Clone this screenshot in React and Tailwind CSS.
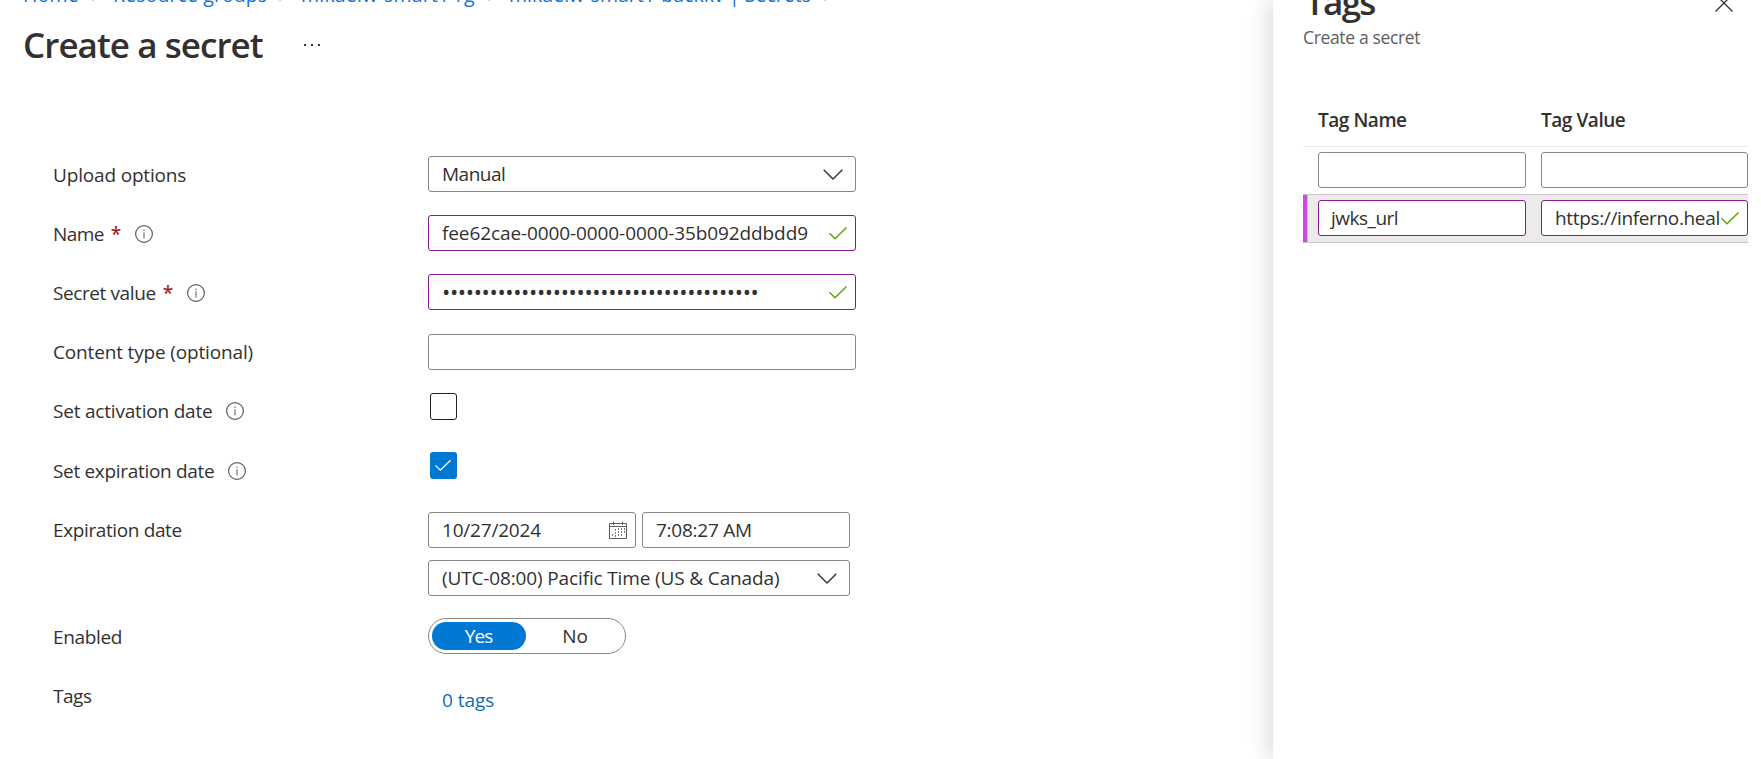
const FONT = "font-['Open_Sans','Noto_Sans',sans-serif]";

function InfoIcon({ className }) {
  return (
    <svg className={`h-[18px] w-[18px] shrink-0 ${className}`} viewBox="0 0 18 18" fill="none">
      <circle cx="9" cy="9" r="8.4" stroke="#605e5c" strokeWidth="1.2" />
      <path d="M9 7.3V13.4" stroke="#979593" strokeWidth="1.6" />
      <path d="M9 4.5V6" stroke="#979593" strokeWidth="1.6" />
    </svg>
  );
}

function Check({ className }) {
  return (
    <svg className={`h-[13px] shrink-0 ${className}`} viewBox="0 0 18 13" fill="none">
      <path d="M0.5 6.3L6 11.8L17.5 0.6" stroke="currentColor" strokeWidth="1.4" />
    </svg>
  );
}

function Chevron() {
  return (
    <svg className="h-[11px] w-[20px] shrink-0" viewBox="0 0 20 11" fill="none">
      <path d="M0.7 0.7L10 10L19.3 0.7" stroke="#323130" strokeWidth="1.4" />
    </svg>
  );
}

function CrumbSeparator() {
  return (
    <svg className="ml-[12px] h-3 w-[7px] shrink-0" viewBox="0 0 7 12" fill="none">
      <path d="M0.6 0.6L6 6L0.6 11.4" stroke="#605e5c" strokeWidth="1.2" />
    </svg>
  );
}

const box = "flex h-9 items-center rounded-[3px] border bg-white leading-none";

function Row({ label, labelStyle, required, info, height, children }) {
  return (
    <div className={`flex items-start ${height}`}>
      <div className={`flex w-[375px] shrink-0 items-center ${labelStyle}`}>
        <span>{label}</span>
        {required && (
          <span className="ml-[7px] w-[9px] text-[19px] font-semibold tracking-normal text-[#a4262c]">*</span>
        )}
        {info && <InfoIcon className={required ? "ml-[15px]" : "ml-[14px]"} />}
      </div>
      {children}
    </div>
  );
}

export default function App() {
  return (
    <div className={`flex h-[759px] w-[1761px] overflow-hidden bg-white text-[19px] text-[#323130] ${FONT}`}>
      <main className="flex w-[1273px] shrink-0 flex-col">
        <nav className="-mt-[17px] flex h-6 items-center pl-[23px] text-[19.5px] whitespace-nowrap text-[#0f73cf]">
          <span className="w-[57px] shrink-0 tracking-[0.2px]">Home</span>
          <CrumbSeparator />
          <span className="ml-[14px] w-[154px] shrink-0 tracking-[0.1px]">Resource groups</span>
          <CrumbSeparator />
          <span className="ml-[15px] w-[175px] shrink-0 tracking-[0.2px]">mikaelw-smart1-rg</span>
          <CrumbSeparator />
          <span className="ml-[14px] w-[303px] shrink-0 tracking-[0.03px]">mikaelw-smart1-backkv | Secrets</span>
          <CrumbSeparator />
        </nav>
        <header className="flex h-[74px] items-center pl-[23px]">
          <h1 className="w-[280px] text-[35px] leading-none font-semibold tracking-[-0.95px] whitespace-nowrap">
            Create a secret
          </h1>
          <svg className="h-1 w-[18px]" viewBox="0 0 18 4" fill="#323130">
            <rect x="1" y="2" width="2" height="2" />
            <rect x="8" y="2" width="2" height="2" />
            <rect x="15" y="2" width="2" height="2" />
          </svg>
        </header>
        <section className="mt-[75px] flex flex-col pl-[53px] whitespace-nowrap">
          <Row label="Upload options" labelStyle="h-[38px] tracking-[-0.17px]" height="h-[59px]">
            <div className={`${box} w-[428px] justify-between border-[#8a8886] pr-[12px] pl-[13px]`}>
              <span className="tracking-[-0.5px]">Manual</span>
              <Chevron />
            </div>
          </Row>
          <Row label="Name" labelStyle="h-[38px] tracking-[-0.6px]" required info height="h-[59px]">
            <div className={`${box} w-[428px] justify-between border-[#881798] pr-[8px] pl-[13px]`}>
              <span className="tracking-[-0.1px]">fee62cae-0000-0000-0000-35b092ddbdd9</span>
              <Check className="w-[18px] text-[#57a300]" />
            </div>
          </Row>
          <Row label="Secret value" labelStyle="h-[38px] tracking-[-0.4px]" required info height="h-[60px]">
            <div className={`${box} w-[428px] justify-between border-[#881798] pr-[8px] pl-[13px]`}>
              <span className="pb-0.5 text-[22px] tracking-[-0.36px]">••••••••••••••••••••••••••••••••••••••••</span>
              <Check className="w-[18px] text-[#57a300]" />
            </div>
          </Row>
          <Row label="Content type (optional)" labelStyle="h-[36px] tracking-[-0.16px]" height="h-[59px]">
            <div className={`${box} w-[428px] border-[#8a8886]`} />
          </Row>
          <Row label="Set activation date" labelStyle="h-[36px] tracking-[-0.2px]" info height="h-[59px]">
            <div className="ml-0.5 h-[27px] w-[27px] rounded-[3px] border border-[#201f1e]" />
          </Row>
          <Row label="Set expiration date" labelStyle="h-[38px] tracking-[-0.32px]" info height="h-[60px]">
            <div className="ml-0.5 flex h-[27px] w-[27px] items-center justify-center rounded-[3px] bg-[#0078d4] pr-px text-white">
              <Check className="w-[16px]" />
            </div>
          </Row>
          <Row label="Expiration date" labelStyle="h-[36px] tracking-[-0.38px]" height="h-[106px]">
            <div className="flex w-[422px] flex-col gap-3">
              <div className="flex gap-1.5">
                <div className={`${box} w-[208px] justify-between border-[#8a8886] pr-[8px] pl-[13px]`}>
                  <span className="tracking-[-0.2px]">10/27/2024</span>
                  <svg className="h-[18px] w-[18px]" viewBox="0 0 18 18" fill="none" stroke="#605e5c">
                    <path d="M0.5 2.5H17.5V17.5H0.5Z M0.5 5.5H17.5 M4.5 0.5V4 M13.5 0.5V4" />
                    <path
                      d="M3.5 13V16M6.5 8V16M9.5 7V16M12.5 7V16M15.5 7V13"
                      strokeDasharray="2 1"
                      stroke="#797775"
                    />
                  </svg>
                </div>
                <div className={`${box} w-[208px] border-[#8a8886] pl-[13px]`}>
                  <span className="tracking-[-0.25px]">7:08:27 AM</span>
                </div>
              </div>
              <div className={`${box} justify-between border-[#8a8886] pr-[12px] pl-[13px]`}>
                <span className="tracking-[-0.14px]">(UTC-08:00) Pacific Time (US &amp; Canada)</span>
                <Chevron />
              </div>
            </div>
          </Row>
          <Row label="Enabled" labelStyle="h-[38px] tracking-[-0.35px]" height="h-[60px]">
            <div className="flex h-9 w-[198px] items-center rounded-full border border-[#8a8886] px-[3px] leading-none">
              <span className="flex h-7 w-[94px] items-center justify-center rounded-full bg-[#0078d4] pr-px font-medium tracking-[-0.9px] text-white">
                Yes
              </span>
              <span className="flex flex-1 items-center justify-center pl-0.5">No</span>
            </div>
          </Row>
          <Row label="Tags" labelStyle="h-[36px] tracking-[-0.45px]" height="h-[59px]">
            <a className="mt-[8px] ml-[14px] tracking-[-0.05px] text-[#0f6cbd]">0 tags</a>
          </Row>
        </section>
      </main>
      <aside className="flex flex-1 flex-col bg-white pl-[30px] whitespace-nowrap shadow-[0_0_25px_rgba(0,0,0,0.2)]">
        <div className="-mt-[20px] flex items-start justify-between pr-[28px]">
          <h2 className="ml-[2px] h-[43px] text-[35px] leading-[44px] font-semibold tracking-[-1.7px]">Tags</h2>
          <svg className="mt-[14px] h-[18px] w-[18px]" viewBox="0 0 18 18" fill="none">
            <path d="M0.5 0.5L17.5 17.5M17.5 0.5L0.5 17.5" stroke="#323130" strokeWidth="1.3" />
          </svg>
        </div>
        <p className="mt-0.5 text-[17.5px] leading-6 tracking-[-0.35px] text-[#605e5c]">Create a secret</p>
        <div className="mt-[51px] w-[445px]">
          <div className="flex h-[47px] gap-[15px] border-b border-[#edebe9] pt-[7px] pl-[15px] leading-[27px] font-semibold">
            <span className="w-[208px] tracking-[-0.45px]">Tag Name</span>
            <span className="tracking-[-0.45px]">Tag Value</span>
          </div>
          <div className="flex h-[47px] gap-[15px] pt-[5px] pl-[15px]">
            <div className={`${box} w-[208px] border-[#8a8886]`} />
            <div className={`${box} w-[207px] border-[#8a8886]`} />
          </div>
          <div className="flex h-[49px] border-y border-[#c8c6c4] bg-[#edebe9]">
            <div className="w-[5px] border-r border-[#dfa5ea] bg-[#c74fdb]" />
            <div className="flex gap-[15px] pt-[5px] pl-[10px]">
              <div className={`${box} w-[208px] border-[#881798] pl-[12px] tracking-[-0.5px]`}>jwks_url</div>
              <div className={`${box} w-[207px] border-[#881798] pr-[8px] pl-[13px]`}>
                <span className="w-[166px] overflow-hidden leading-[34px] tracking-[-0.35px]">https://inferno.heal</span>
                <Check className="w-[18px] text-[#57a300]" />
              </div>
            </div>
          </div>
        </div>
      </aside>
    </div>
  );
}
